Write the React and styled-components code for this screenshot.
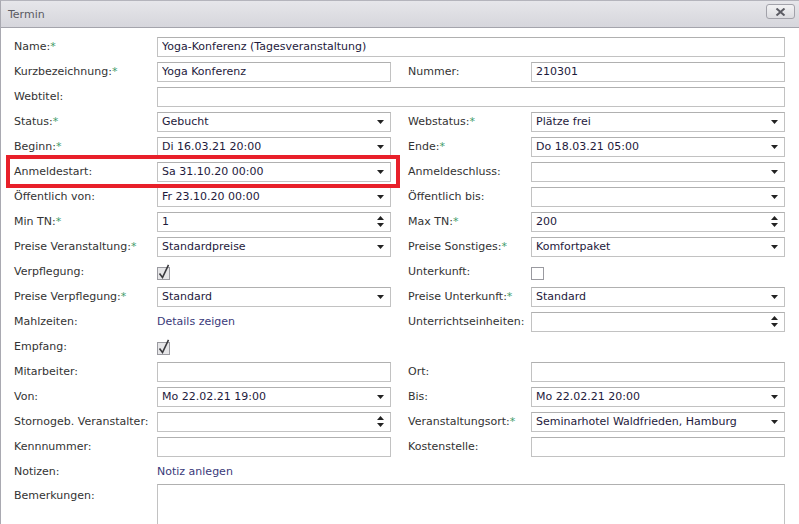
import React from "react";
import styled, { createGlobalStyle } from "styled-components";

const GlobalStyle = createGlobalStyle`
  html, body {
    margin: 0;
    padding: 0;
    background: #ffffff;
  }
  body {
    font-family: "DejaVu Sans", Verdana, sans-serif;
    font-size: 11px;
    color: #333;
  }
`;

const Window = styled.div`
  position: relative;
  width: 799px;
  height: 524px;
  box-sizing: border-box;
  border-left: 1px solid #a9a9b1;
  border-top: 1px solid #b4b4bc;
  background: #fff;
  overflow: hidden;
`;

const TitleBar = styled.div`
  height: 26px;
  display: flex;
  align-items: center;
  justify-content: space-between;
  padding: 0 4px 0 7px;
  background: linear-gradient(#e6e6ea, #d6d6dc);
  border-bottom: 1px solid #a4a4ac;
  color: #5a5a62;
`;

const CloseButton = styled.div`
  width: 27px;
  height: 13px;
  border: 1px solid #a2a2aa;
  border-radius: 3px;
  background: linear-gradient(#f2f2f4, #dcdce0);
  display: flex;
  align-items: center;
  justify-content: center;
  margin-top: -5px;
`;

const Form = styled.div`
  display: grid;
  grid-template-columns: 143px 234px 17px 123px 254px;
  grid-auto-rows: 25px;
  padding: 6px 0 0 13px;
`;

const Label = styled.div`
  grid-column: ${(p) => (p.right ? "4" : "1")};
  display: flex;
  align-items: ${(p) => (p.top ? "flex-start" : "center")};
  padding-top: ${(p) => (p.top ? "5px" : "0")};
  white-space: nowrap;
  color: #333;
`;

const Star = styled.span`
  color: #3f9d6a;
`;

const Cell = styled.div`
  grid-column: ${(p) => (p.full ? "2 / -1" : p.right ? "5" : "2")};
  display: flex;
  align-items: ${(p) => (p.top ? "flex-start" : "center")};
`;

const Box = styled.div`
  width: 100%;
  height: ${(p) => (p.tall ? "60px" : "20px")};
  box-sizing: border-box;
  border: 1px solid #c2c2c2;
  border-top-color: #b0b0b0;
  background: #fff;
  display: flex;
  align-items: center;
  padding: 0 6px 0 4px;
  color: #1e1a3c;
  white-space: nowrap;
`;

const Value = styled.span`
  flex: 1;
  overflow: hidden;
`;

const LinkText = styled.span`
  color: #3a3a7a;
`;

const Highlight = styled.div`
  position: absolute;
  left: 5px;
  top: 154px;
  width: 394px;
  height: 33px;
  box-sizing: border-box;
  border: 4px solid #e8202a;
  pointer-events: none;
`;

const Arrow = () => (
  <svg width="7" height="4" viewBox="0 0 7 4">
    <path d="M0 0h7L3.5 4z" fill="#222" />
  </svg>
);

const Spin = () => (
  <svg width="7" height="11" viewBox="0 0 7 11">
    <path d="M0 4h7L3.5 0zM0 7h7L3.5 11z" fill="#222" />
  </svg>
);

const Check = ({ checked }) => (
  <svg width="14" height="16" viewBox="0 0 14 16">
    <rect
      x="0.5"
      y="3.5"
      width="12"
      height="12"
      fill={checked ? "#e6e6e8" : "#fff"}
      stroke="#9a9aa0"
    />
    {checked && (
      <path
        d="M2.5 9.5l3 4L11.5 0.8"
        fill="none"
        stroke="#3a3a3e"
        strokeWidth="1.6"
      />
    )}
  </svg>
);

function Field({ kind, value }) {
  if (kind === "check") return <Check checked={value} />;
  if (kind === "link") return <LinkText>{value}</LinkText>;
  return (
    <Box tall={kind === "area"}>
      <Value>{value}</Value>
      {kind === "select" && <Arrow />}
      {kind === "spin" && <Spin />}
    </Box>
  );
}

const rows = [
  { l: ["Name:", true], f: ["text", "Yoga-Konferenz (Tagesveranstaltung)"], full: true },
  { l: ["Kurzbezeichnung:", true], f: ["text", "Yoga Konferenz"], rl: ["Nummer:"], rf: ["text", "210301"] },
  { l: ["Webtitel:"], f: ["text", ""], full: true },
  { l: ["Status:", true], f: ["select", "Gebucht"], rl: ["Webstatus:", true], rf: ["select", "Plätze frei"] },
  { l: ["Beginn:", true], f: ["select", "Di 16.03.21 20:00"], rl: ["Ende:", true], rf: ["select", "Do 18.03.21 05:00"] },
  { l: ["Anmeldestart:"], f: ["select", "Sa 31.10.20 00:00"], rl: ["Anmeldeschluss:"], rf: ["select", ""] },
  { l: ["Öffentlich von:"], f: ["select", "Fr 23.10.20 00:00"], rl: ["Öffentlich bis:"], rf: ["select", ""] },
  { l: ["Min TN:", true], f: ["spin", "1"], rl: ["Max TN:", true], rf: ["spin", "200"] },
  { l: ["Preise Veranstaltung:", true], f: ["select", "Standardpreise"], rl: ["Preise Sonstiges:", true], rf: ["select", "Komfortpaket"] },
  { l: ["Verpflegung:"], f: ["check", true], rl: ["Unterkunft:"], rf: ["check", false] },
  { l: ["Preise Verpflegung:", true], f: ["select", "Standard"], rl: ["Preise Unterkunft:", true], rf: ["select", "Standard"] },
  { l: ["Mahlzeiten:"], f: ["link", "Details zeigen"], rl: ["Unterrichtseinheiten:"], rf: ["spin", ""] },
  { l: ["Empfang:"], f: ["check", true] },
  { l: ["Mitarbeiter:"], f: ["text", ""], rl: ["Ort:"], rf: ["text", ""] },
  { l: ["Von:"], f: ["select", "Mo 22.02.21 19:00"], rl: ["Bis:"], rf: ["select", "Mo 22.02.21 20:00"] },
  { l: ["Stornogeb. Veranstalter:"], f: ["spin", ""], rl: ["Veranstaltungsort:", true], rf: ["select", "Seminarhotel Waldfrieden, Hamburg"] },
  { l: ["Kennnummer:"], f: ["text", ""], rl: ["Kostenstelle:"], rf: ["text", ""] },
  { l: ["Notizen:"], f: ["link", "Notiz anlegen"] },
  { l: ["Bemerkungen:"], f: ["area", ""], full: true, top: true },
];

export default function App() {
  return (
    <>
      <GlobalStyle />
      <Window>
        <TitleBar>
          <span>Termin</span>
          <CloseButton>
            <svg width="11" height="8" viewBox="0 0 11 8">
              <path d="M1.5 0.5l8 7M9.5 0.5l-8 7" stroke="#5c5c64" strokeWidth="2" />
            </svg>
          </CloseButton>
        </TitleBar>
        <Form>
          {rows.map((r, i) => (
            <React.Fragment key={i}>
              <Label top={r.top}>
                {r.l[0]}
                {r.l[1] && <Star>*</Star>}
              </Label>
              <Cell full={r.full} top={r.top}>
                <Field kind={r.f[0]} value={r.f[1]} />
              </Cell>
              {r.rl && (
                <>
                  <Label right>
                    {r.rl[0]}
                    {r.rl[1] && <Star>*</Star>}
                  </Label>
                  <Cell right>
                    <Field kind={r.rf[0]} value={r.rf[1]} />
                  </Cell>
                </>
              )}
            </React.Fragment>
          ))}
        </Form>
        <Highlight />
      </Window>
    </>
  );
}
